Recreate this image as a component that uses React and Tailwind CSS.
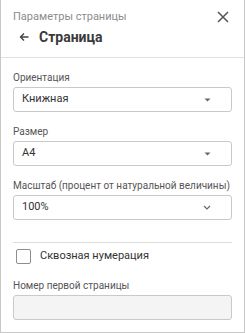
import React, { useState } from 'react';

const Caret = () => (
  <svg width="7" height="4" viewBox="0 0 7 4" className="text-[#666]">
    <path d="M0.5 0.5h6L3.5 3.5z" fill="currentColor" />
  </svg>
);

const Chevron = () => (
  <svg width="8" height="5" viewBox="0 0 8 5" className="text-[#666]">
    <path d="M1 1l3 3 3-3" fill="none" stroke="currentColor" strokeWidth="1.2" />
  </svg>
);

const Select = ({ value, icon }) => (
  <div className="flex items-center justify-between h-[25px] border border-[#c9c9c9] rounded-[3px] pl-[8px] pr-[20px] text-[11px] text-[#333]">
    <span>{value}</span>
    {icon}
  </div>
);

const Label = ({ children }) => (
  <div className="text-[10px] leading-[14px] text-[#555] mb-[2px] whitespace-nowrap">{children}</div>
);

export default function App() {
  const [checked, setChecked] = useState(false);

  return (
    <div className="w-[245px] h-[333px] bg-white border-x border-b border-[#c8c8c8] font-['Roboto',sans-serif] flex flex-col">
      <div className="h-[58px] border-b border-[#e0e0e0] pl-[12px] pr-[15px] pt-[9px]">
        <div className="flex items-center justify-between h-[16px]">
          <span className="text-[11px] text-[#8c8c8c]">Параметры страницы</span>
          <svg width="12" height="12" viewBox="0 0 12 12" className="text-[#555]">
            <path d="M1 1l10 10M11 1L1 11" stroke="currentColor" strokeWidth="1.5" />
          </svg>
        </div>
        <div className="flex items-center h-[20px] mt-[2px] pl-[6px]">
          <svg width="10" height="10" viewBox="0 0 10 10" className="text-[#444]">
            <path d="M9.5 5H1.5M5 1.5L1.5 5 5 8.5" fill="none" stroke="currentColor" strokeWidth="1.4" />
          </svg>
          <span className="ml-[10px] text-[14px] font-bold text-[#3a3a3a]">Страница</span>
        </div>
      </div>

      <div className="px-[12px] pt-[13px]">
        <Label>Ориентация</Label>
        <Select value="Книжная" icon={<Caret />} />

        <div className="mt-[13px]">
          <Label>Размер</Label>
          <Select value="A4" icon={<Caret />} />
        </div>

        <div className="mt-[13px]">
          <Label>Масштаб (процент от натуральной величины)</Label>
          <Select value="100%" icon={<Chevron />} />
        </div>

        <div className="mt-[22px] border-t border-[#dcdcdc]" />

        <label className="flex items-center h-[25px] mt-[1px] pl-[3px] cursor-pointer">
          <input
            type="checkbox"
            checked={checked}
            onChange={(e) => setChecked(e.target.checked)}
            className="appearance-none w-[15px] h-[15px] border-[1.5px] border-[#8e8e8e] rounded-[2px] bg-white"
          />
          <span className="ml-[9px] text-[11px] text-[#333]">Сквозная нумерация</span>
        </label>

        <div className="mt-[10px]">
          <Label>Номер первой страницы</Label>
          <div className="h-[25px] border border-[#c9c9c9] rounded-[3px] bg-[#f4f4f4]" />
        </div>
      </div>
    </div>
  );
}
